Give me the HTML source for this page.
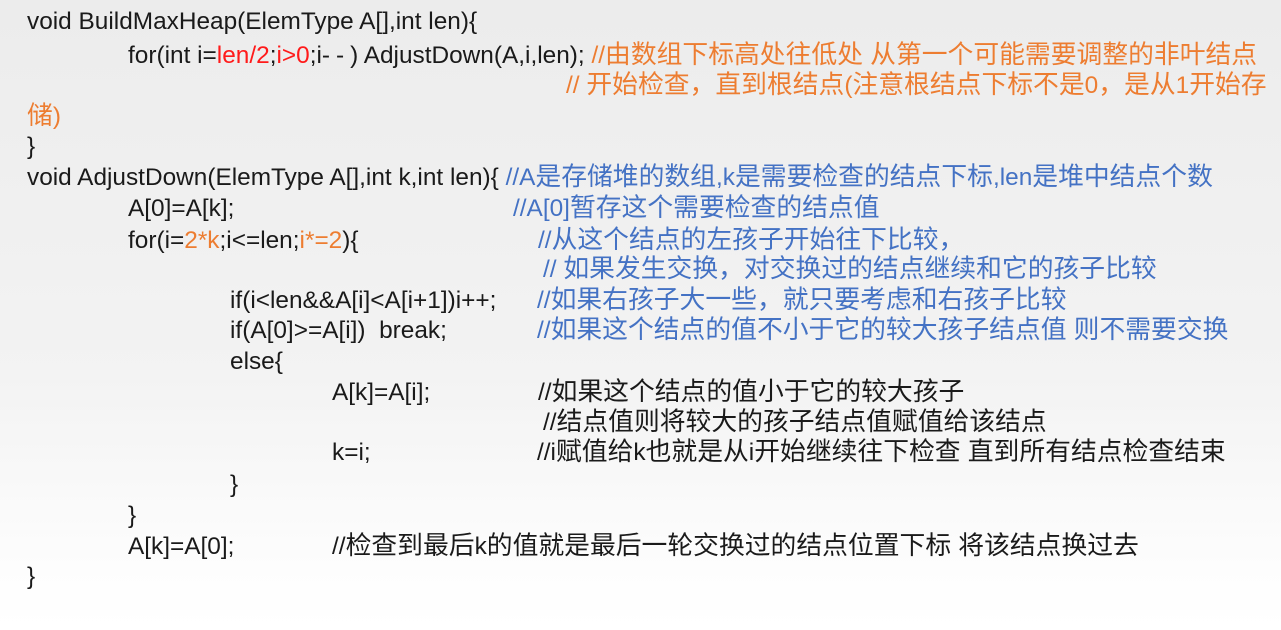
<!DOCTYPE html>
<html><head><meta charset="utf-8"><style>
html,body{margin:0;padding:0}
body{width:1281px;height:630px;position:relative;overflow:hidden;background:linear-gradient(#ececec 0%,#f3f3f3 60%,#fdfdfd 90%,#fff 100%);font-family:"Liberation Sans","Noto Sans CJK SC",sans-serif;font-size:25.8px;color:#1a1a1a}
.r{position:absolute;white-space:pre;line-height:30px;height:30px}
.l{font-size:24.4px}
.h{letter-spacing:6px}
.red{color:#ff1a1a}.o{color:#ed7d31}.b{color:#4472c4}
</style></head><body>
<div class="r" style="left:27px;top:6px"><span class="l">void BuildMaxHeap(ElemType A[],int len){</span></div>
<div class="r" style="left:128px;top:40px"><span class="l">for(int i=<span class="red">len/2</span>;<span class="red">i&gt;0</span>;i<span class="h">--</span>) AdjustDown(A,i,len); </span><span class="o"><span class="l">//</span>由数组下标高处往低处 从第一个可能需要调整的非叶结点</span></div>
<div class="r o" style="left:566px;top:70px"><span class="l">// </span>开始检查，直到根结点<span class="l">(</span>注意根结点下标不是<span class="l">0</span>，是从<span class="l">1</span>开始存</div>
<div class="r o" style="left:27px;top:101px">储<span class="l">)</span></div>
<div class="r" style="left:27px;top:131px"><span class="l">}</span></div>
<div class="r" style="left:27px;top:162px"><span class="l">void AdjustDown(ElemType A[],int k,int len){ </span><span class="b"><span class="l">//A</span>是存储堆的数组<span class="l">,k</span>是需要检查的结点下标<span class="l">,len</span>是堆中结点个数</span></div>
<div class="r" style="left:128px;top:193px"><span class="l">A[0]=A[k];</span></div>
<div class="r b" style="left:513px;top:193px"><span class="l">//A[0]</span>暂存这个需要检查的结点值</div>
<div class="r" style="left:128px;top:225px"><span class="l">for(i=<span class="o">2*k</span>;i&lt;=len;<span class="o">i*=2</span>){</span></div>
<div class="r b" style="left:538px;top:225px"><span class="l">//</span>从这个结点的左孩子开始往下比较，</div>
<div class="r b" style="left:543px;top:254px"><span class="l">// </span>如果发生交换，对交换过的结点继续和它的孩子比较</div>
<div class="r" style="left:230px;top:285px"><span class="l">if(i&lt;len&amp;&amp;A[i]&lt;A[i+1])i++;</span></div>
<div class="r b" style="left:537px;top:285px"><span class="l">//</span>如果右孩子大一些，就只要考虑和右孩子比较</div>
<div class="r" style="left:230px;top:315px"><span class="l">if(A[0]&gt;=A[i])  break;</span></div>
<div class="r b" style="left:537px;top:315px"><span class="l">//</span>如果这个结点的值不小于它的较大孩子结点值 则不需要交换</div>
<div class="r" style="left:230px;top:346px"><span class="l">else{</span></div>
<div class="r" style="left:332px;top:377px"><span class="l">A[k]=A[i];</span></div>
<div class="r" style="left:538px;top:377px"><span class="l">//</span>如果这个结点的值小于它的较大孩子</div>
<div class="r" style="left:543px;top:407px"><span class="l">//</span>结点值则将较大的孩子结点值赋值给该结点</div>
<div class="r" style="left:332px;top:437px"><span class="l">k=i;</span></div>
<div class="r" style="left:537px;top:437px"><span class="l">//i</span>赋值给<span class="l">k</span>也就是从<span class="l">i</span>开始继续往下检查 直到所有结点检查结束</div>
<div class="r" style="left:230px;top:469px"><span class="l">}</span></div>
<div class="r" style="left:128px;top:500px"><span class="l">}</span></div>
<div class="r" style="left:128px;top:531px"><span class="l">A[k]=A[0];</span></div>
<div class="r" style="left:332px;top:531px"><span class="l">//</span>检查到最后<span class="l">k</span>的值就是最后一轮交换过的结点位置下标 将该结点换过去</div>
<div class="r" style="left:27px;top:561px"><span class="l">}</span></div>
</body></html>
